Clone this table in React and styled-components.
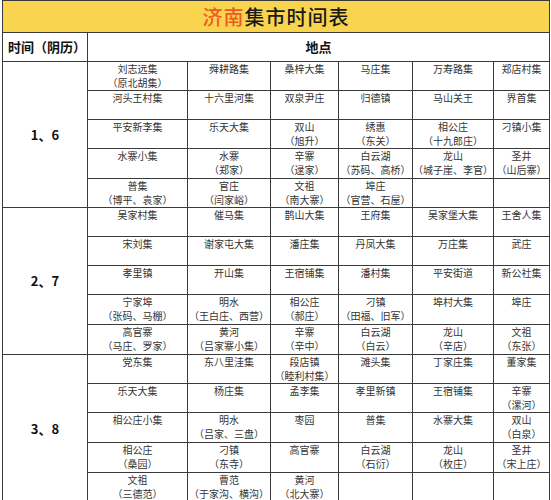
import styled, { createGlobalStyle } from "styled-components";

const GlobalStyle = createGlobalStyle`
  html, body {
    margin: 0;
    padding: 0;
    background: #ffffff;
  }
  body {
    font-family: "Noto Sans CJK SC", "Noto Sans", sans-serif;
  }
`;

const Page = styled.div`
  width: 551px;
  height: 500px;
  overflow: hidden;
  padding: 0 2px;
  box-sizing: border-box;
`;

const Table = styled.table`
  width: 547px;
  border-collapse: collapse;
  table-layout: fixed;
  font-family: "Noto Sans CJK SC", sans-serif;
  color: #333;
`;

const TitleCell = styled.th`
  height: 31px;
  padding: 0;
  background: #f9d44e;
  border: 1px solid #3a3a3a;
  font-size: 20px;
  line-height: 24px;
  font-weight: 500;
  color: #1a1a1a;
  text-align: center;
  vertical-align: middle;
  letter-spacing: 1px;
`;

const Accent = styled.span`
  color: #ee5a24;
`;

const HeadCell = styled.th`
  height: 28px;
  padding: 0 0 0 ${(p) => (p.$left ? "5px" : "0")};
  border: 1px solid #3a3a3a;
  font-size: 13px;
  line-height: 16px;
  font-weight: 700;
  color: #111;
  text-align: ${(p) => (p.$left ? "left" : "center")};
  vertical-align: middle;
  white-space: nowrap;
`;

const DayCell = styled.td`
  border: 1px solid #3a3a3a;
  font-size: 13px;
  line-height: 16px;
  font-weight: 700;
  color: #111;
  text-align: center;
  vertical-align: middle;
  padding: 0;
`;

const Row = styled.tr`
  height: ${(p) => p.$h}px;
`;

const Cell = styled.td`
  border: 1px solid #3a3a3a;
  padding: 0;
  font-size: 10px;
  line-height: 14px;
  text-align: center;
  vertical-align: top;
  white-space: nowrap;
  color: #333;
`;

const Sub = styled.div`
  display: block;
`;

const sections = [
  {
    day: "1、6",
    heights: [29, 29, 29, 30, 28],
    rows: [
      [["刘志远集", "（原北胡集）"], ["舜耕路集"], ["桑梓大集"], ["马庄集"], ["万寿路集"], ["郑店村集"]],
      [["河头王村集"], ["十六里河集"], ["双泉尹庄"], ["归德镇"], ["马山关王"], ["界首集"]],
      [["平安新李集"], ["乐天大集"], ["双山", "（旭升）"], ["绣惠", "（东关）"], ["相公庄", "（十九郎庄）"], ["刁镇小集"]],
      [["水寨小集"], ["水寨", "（郑家）"], ["辛寨", "（逯家）"], ["白云湖", "（苏码、高桥）"], ["龙山", "（城子崖、李官）"], ["圣井", "（山后寨）"]],
      [["普集", "（博平、袁家）"], ["官庄", "（闫家峪）"], ["文祖", "（南大寨）"], ["埠庄", "（官营、石屋）"], [], []],
    ],
  },
  {
    day: "2、7",
    heights: [29, 29, 29, 30, 30],
    rows: [
      [["吴家村集"], ["催马集"], ["鹊山大集"], ["王府集"], ["吴家堡大集"], ["王舍人集"]],
      [["宋刘集"], ["谢家屯大集"], ["潘庄集"], ["丹凤大集"], ["万庄集"], ["武庄"]],
      [["孝里镇"], ["开山集"], ["王宿铺集"], ["潘村集"], ["平安街道"], ["新公社集"]],
      [["宁家埠", "（张码、马棚）"], ["明水", "（王白庄、西营）"], ["相公庄", "（郝庄）"], ["刁镇", "（田福、旧军）"], ["埠村大集"], ["埠庄"]],
      [["高官寨", "（马庄、罗家）"], ["黄河", "（吕家寨小集）"], ["辛寨", "（辛中）"], ["白云湖", "（白云）"], ["龙山", "（辛店）"], ["文祖", "（东张）"]],
    ],
  },
  {
    day: "3、8",
    heights: [29, 29, 30, 30, 30],
    rows: [
      [["党东集"], ["东八里洼集"], ["段店镇", "（睦利村集）"], ["滩头集"], ["丁家庄集"], ["董家集"]],
      [["乐天大集"], ["杨庄集"], ["孟李集"], ["孝里新镇"], ["王宿铺集"], ["辛寨", "（漯河）"]],
      [["相公庄小集"], ["明水", "（吕家、三盘）"], ["枣园"], ["普集"], ["水寨大集"], ["双山", "（白泉）"]],
      [["相公庄", "（桑园）"], ["刁镇", "（东寺）"], ["高官寨"], ["白云湖", "（石衍）"], ["龙山", "（枚庄）"], ["圣井", "（宋上庄）"]],
      [["文祖", "（三德范）"], ["曹范", "（于家沟、横沟）"], ["黄河", "（北大寨）"], [], [], []],
    ],
  },
];

const widths = [85, 100, 83, 68, 74, 81, 56];

export default function App() {
  return (
    <Page>
      <GlobalStyle />
      <Table>
        <colgroup>
          {widths.map((w, i) => (
            <col key={i} style={{ width: w }} />
          ))}
        </colgroup>
        <thead>
          <tr>
            <TitleCell colSpan={7}>
              <Accent>济南</Accent>集市时间表
            </TitleCell>
          </tr>
          <tr>
            <HeadCell $left>时间（阴历）</HeadCell>
            <HeadCell colSpan={6}>地点</HeadCell>
          </tr>
        </thead>
        <tbody>
          {sections.map((s) =>
            s.rows.map((row, ri) => (
              <Row key={s.day + ri} $h={s.heights[ri]}>
                {ri === 0 && <DayCell rowSpan={s.rows.length}>{s.day}</DayCell>}
                {row.map((lines, ci) => (
                  <Cell key={ci}>
                    {lines.map((t, li) => (
                      <Sub key={li}>{t}</Sub>
                    ))}
                  </Cell>
                ))}
              </Row>
            ))
          )}
        </tbody>
      </Table>
    </Page>
  );
}
